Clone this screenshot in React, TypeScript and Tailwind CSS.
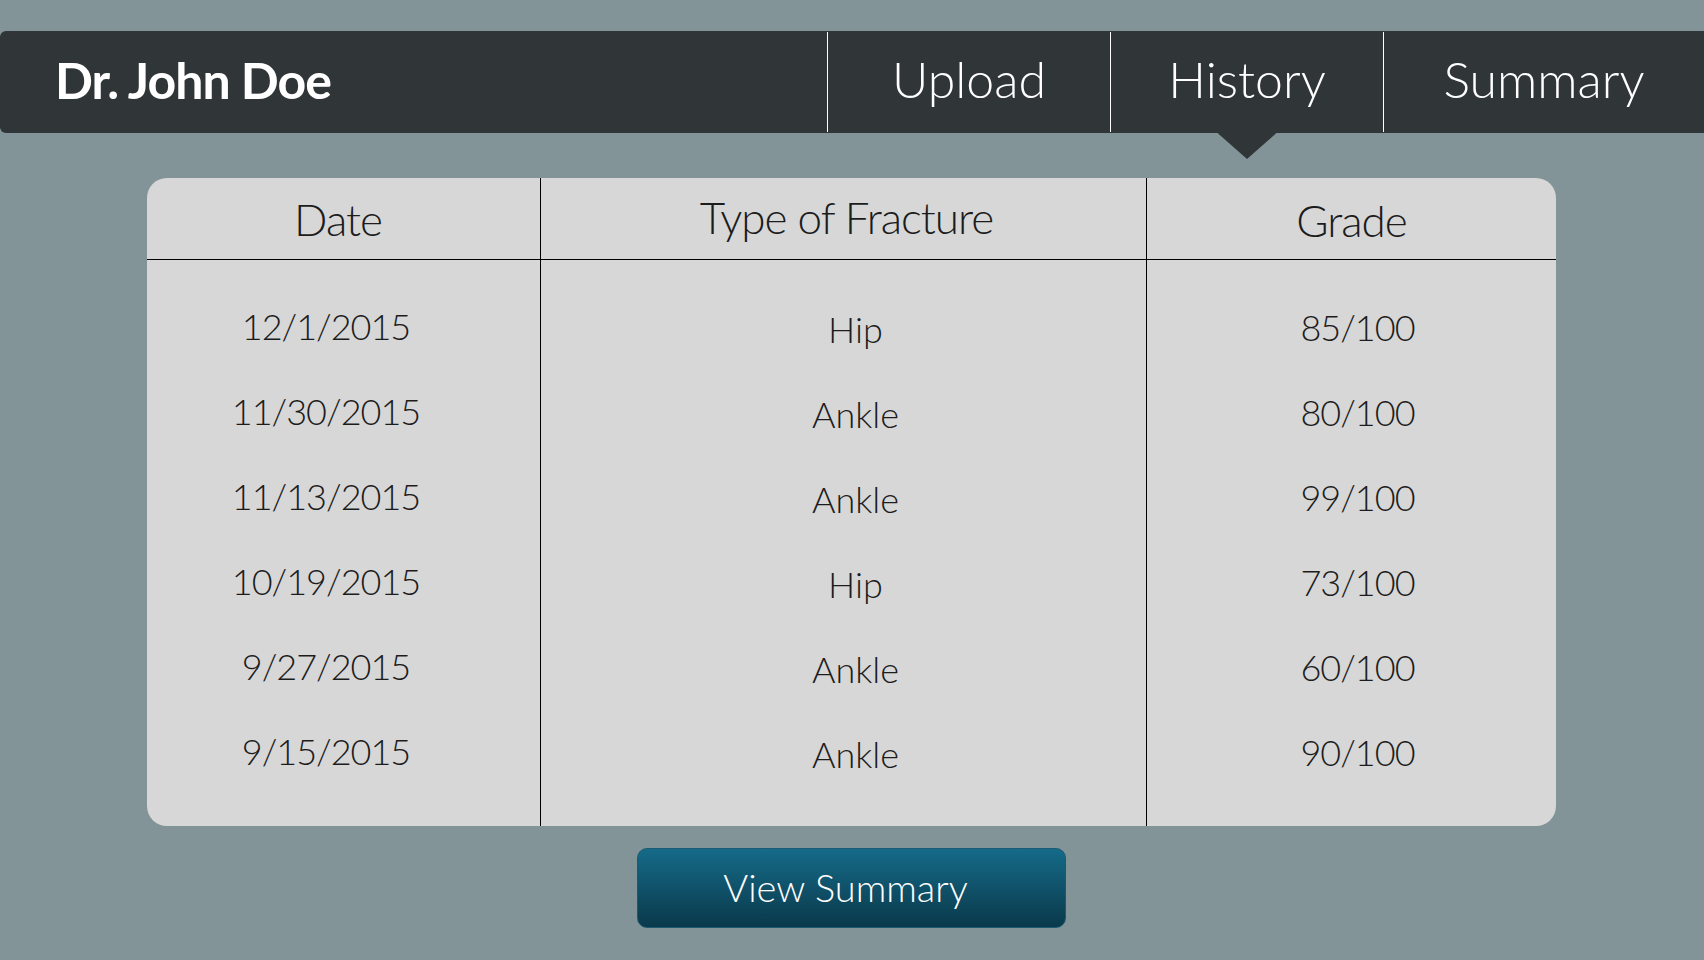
const rows = [
  { date: "12/1/2015", type: "Hip", grade: "85/100" },
  { date: "11/30/2015", type: "Ankle", grade: "80/100" },
  { date: "11/13/2015", type: "Ankle", grade: "99/100" },
  { date: "10/19/2015", type: "Hip", grade: "73/100" },
  { date: "9/27/2015", type: "Ankle", grade: "60/100" },
  { date: "9/15/2015", type: "Ankle", grade: "90/100" },
];

export default function App() {
  return (
    <div className="min-h-[960px] w-full bg-[#829498] pt-[31px] font-[Lato,sans-serif]">
      <header className="flex h-[102px] items-stretch rounded-l-[6px] bg-[#303538] text-white">
        <div className="flex flex-1 items-center pb-[3px] pl-[55px] text-[50px] font-bold tracking-[-1px]">
          Dr. John Doe
        </div>
        <Divider />
        <Tab label="Upload" className="w-[282px]" />
        <Divider />
        <Tab label="History" className="w-[272px]" active />
        <Divider />
        <Tab label="Summary" className="w-[320px]" />
      </header>

      <div className="ml-[147px] mt-[45px] w-[1409px]">
        <div className="flex h-[648px] overflow-hidden rounded-[20px] bg-[#d7d7d7] font-light tracking-[-1px] text-[#1c1c1c]">
          <Column
            title="Date"
            className="w-[393px]"
            headClass="pr-[11px]"
            cellClass="pr-[35px]"
            bodyClass="pt-[23px]"
            values={rows.map((r) => r.date)}
          />
          <Column
            title="Type of Fracture"
            className="w-[606px] border-l border-black"
            headClass="pl-[6px] pb-[3px]"
            cellClass="pl-[24px] tracking-normal"
            bodyClass="pt-[26px]"
            values={rows.map((r) => r.type)}
          />
          <Column
            title="Grade"
            className="flex-1 border-l border-black"
            headClass="pt-[3px]"
            cellClass="pl-[12px]"
            bodyClass="pt-[24px]"
            values={rows.map((r) => r.grade)}
          />
        </div>

        <div className="mt-[22px] flex justify-center">
          <button className="flex h-[80px] w-[429px] items-center justify-center rounded-[10px] border border-[#1b5a72] bg-gradient-to-b from-[#156b89] to-[#0a394b] pb-[2px] pr-[12px] text-[38px] font-light text-white">
            View Summary
          </button>
        </div>
      </div>
    </div>
  );
}

function Divider() {
  return <div className="my-px w-px bg-white" />;
}

function Tab(props: { label: string; className: string; active?: boolean }) {
  const { label, className, active } = props;
  return (
    <div
      className={`relative flex items-center justify-center pb-[5px] text-[50px] font-light ${className}`}
    >
      {label}
      {active && (
        <svg
          className="absolute left-1/2 top-full -translate-x-1/2"
          width="59"
          height="26"
          viewBox="0 0 59 26"
        >
          <polygon points="0,0 59,0 29.5,26" fill="#303538" />
        </svg>
      )}
    </div>
  );
}

function Column(props: {
  title: string;
  className: string;
  headClass: string;
  cellClass: string;
  bodyClass: string;
  values: string[];
}) {
  const { title, className, headClass, cellClass, bodyClass, values } = props;
  return (
    <div className={`flex flex-col ${className}`}>
      <div
        className={`flex h-[82px] items-center justify-center border-b border-black text-[44px] ${headClass}`}
      >
        {title}
      </div>
      <div className={`flex flex-col ${bodyClass}`}>
        {values.map((v, i) => (
          <div
            key={i}
            className={`flex h-[85px] items-center justify-center text-[36px] ${cellClass}`}
          >
            {v}
          </div>
        ))}
      </div>
    </div>
  );
}
